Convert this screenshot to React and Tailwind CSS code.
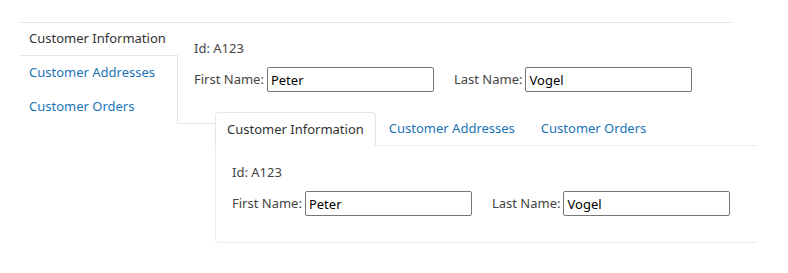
import React, { useState } from "react";

const font = { fontFamily: '"Segoe UI", "Noto Sans", sans-serif' };

const tabs = ["Customer Information", "Customer Addresses", "Customer Orders"];

function CustomerForm() {
  return (
    <div className="text-[13px] text-[#444]">
      <div className="leading-5">Id: A123</div>
      <div className="mt-[9px] flex items-center">
        <label className="mr-[3px]">First Name:</label>
        <input
          defaultValue="Peter"
          className="h-[25px] w-[167px] rounded-[2px] border border-[#767676] px-[3px] text-[13px] text-black outline-none"
        />
        <label className="ml-5 mr-[3px]">Last Name:</label>
        <input
          defaultValue="Vogel"
          className="h-[25px] w-[167px] rounded-[2px] border border-[#767676] px-[3px] text-[13px] text-black outline-none"
        />
      </div>
    </div>
  );
}

function VerticalTabs() {
  const [active, setActive] = useState(0);
  return (
    <div className="flex h-[101px] w-[158px] shrink-0 flex-col self-start border-r border-[#e6e6e6]">
      {tabs.map((t, i) => (
        <button
          key={t}
          onClick={() => setActive(i)}
          className={
            "h-[33px] shrink-0 whitespace-nowrap px-[9px] text-left text-[13px] " +
            (i === active
              ? "-mr-px border-b border-[#e6e6e6] bg-white text-[#333]"
              : "h-[34px] text-[#1a73b8]")
          }
        >
          {t}
        </button>
      ))}
    </div>
  );
}

function HorizontalTabs() {
  const [active, setActive] = useState(0);
  return (
    <div className="w-[542px] shrink-0">
      <div className="flex border-b border-[#ececec]">
        {tabs.map((t, i) => (
          <button
            key={t}
            onClick={() => setActive(i)}
            className={
              "-mb-px h-[34px] whitespace-nowrap text-[13px] " +
              (i === active
                ? "rounded-t-[4px] border border-b-0 border-[#e6e6e6] bg-white px-[11px] text-[#333]"
                : "border border-transparent px-[12px] text-[#1a73b8]")
            }
          >
            {t}
          </button>
        ))}
      </div>
      <div className="rounded-bl-[4px] border-b border-l border-[#ececec] pb-[26px] pl-4 pt-[16px]">
        <CustomerForm />
      </div>
    </div>
  );
}

export default function App() {
  return (
    <div className="h-[273px] overflow-hidden bg-white pl-5 pt-[22px]" style={font}>
      <div className="flex w-[712px] border-t border-[#e6e6e6]">
        <VerticalTabs />
        <div className="min-w-0 flex-1 pt-[15px]">
          <div className="pl-4">
            <CustomerForm />
          </div>
          <div className="mt-5 flex items-start">
            <div className="h-[12px] w-[37px] shrink-0 border-b border-[#e6e6e6]" />
            <HorizontalTabs />
          </div>
        </div>
      </div>
    </div>
  );
}
